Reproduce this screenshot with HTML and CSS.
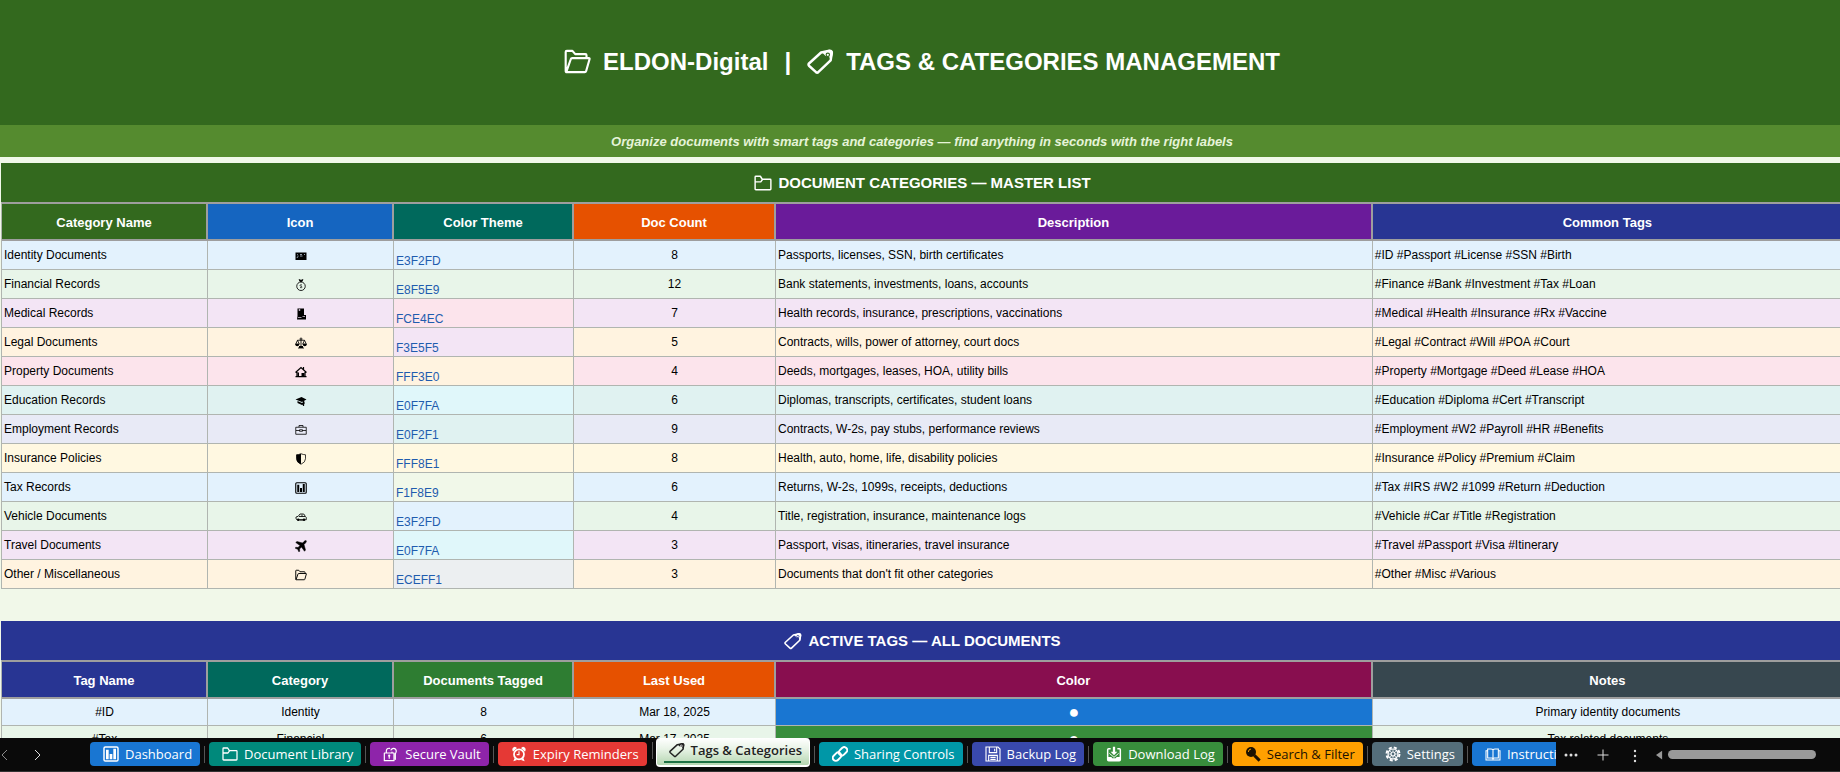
FILE: index.html
```html
<!DOCTYPE html>
<html lang="en">
<head>
  <meta charset="UTF-8" />
  <meta name="viewport" content="width=device-width, initial-scale=1.0"/>
  <title>ELDON-Digital | Tags &amp; Categories Management</title>
  <link rel="stylesheet" href="styles.css">
</head>
<body>
  <!-- shared icons -->
  <svg class="sprite" aria-hidden="true">
    <symbol id="i-folder-open" viewBox="0 0 24 24"><path d="M1.5 20.500V3.500q0-1 1-1h5l2.500 3h9q1 0 1 1V9M2 21.500 6 10q.3-1 1.300-1H22q1 0 .7 1l-3 10.500q-.3 1-1.300 1H2.500q-1 0-1-1" fill="none" stroke="currentColor" stroke-width="1.900" stroke-linejoin="round"/></symbol>
    <symbol id="i-folder" viewBox="0 0 24 24"><path d="M1.500 20V4q0-1 1-1h6l2.500 4h10.500q1 0 1 1v12q0 1-1 1h-19q-1 0-1-1zM2 10.500h7L11.500 7" fill="none" stroke="currentColor" stroke-width="1.900" stroke-linejoin="round"/></symbol>
    <symbol id="i-tag" viewBox="0 0 24 24"><path d="M1.500 14 12.500 4 20 2.500q2.500 0 2 2.500l-1 6L10 21.500q-1 .8-2 0l-6-5.500q-1-1-.500-2z" fill="none" stroke="currentColor" stroke-width="2.200" stroke-linejoin="round"/><path d="m13.500 4 5-2.300q4.500-.5 4.500 2.800l-1.500 6.500-2-3.500-3-.5z" fill="currentColor"/><circle cx="18.500" cy="6" r="1.500" fill="none" stroke="var(--tag-bg, #33691e)" stroke-width="1"/></symbol>
    <symbol id="i-chart" viewBox="0 0 24 24"><rect x="1.500" y="1.500" width="21" height="21" rx="2" fill="none" stroke="currentColor" stroke-width="2.200"/><path d="M4.500 5.500h4V20h-4zM10 12h4v8h-4zM15.500 4h4v16h-4z" fill="currentColor"/></symbol>
    <symbol id="i-lock" viewBox="0 0 24 24"><path d="M2 10.500h14.500V22H2zM5 10V7.500a4 4 0 0 1 5-4M13.500 10V9M12 6a4 4 0 1 1 7.500 3.500l-1 2v8.500" fill="none" stroke="currentColor" stroke-width="1.800" stroke-linecap="round" stroke-linejoin="round"/><circle cx="9.300" cy="14.500" r="1.700" fill="currentColor"/><path d="M8.500 15h1.700v4H8.500z" fill="currentColor"/></symbol>
    <symbol id="i-alarm" viewBox="0 0 24 24"><circle cx="12" cy="12.500" r="7.500" fill="none" stroke="currentColor" stroke-width="2.600"/><path d="M12 8v5h-3.500" fill="none" stroke="currentColor" stroke-width="1.700"/><path d="M2 6q-.5-4 4-5l3 2-6 5.500zM22 6q.5-4-4-5l-3 2 6 5.500zM3.500 23l2-5 3.500 3zM20.500 23l-2-5-3.500 3z" fill="currentColor"/></symbol>
    <symbol id="i-link" viewBox="0 0 24 24"><g fill="none" stroke="currentColor" stroke-width="2.800"><rect x="9.500" y="3.500" width="14" height="9" rx="4.500" transform="rotate(-45 16.500 8)"/><rect x="0.500" y="11.500" width="14" height="9" rx="4.500" transform="rotate(-45 7.500 16)"/></g></symbol>
    <symbol id="i-floppy" viewBox="0 0 24 24"><path d="M1.500 1.500h18l3 3v18h-21zM6.500 2v8h11V2M5.500 22v-8h13v8M14.500 4v4M8 17h8M8 20h8" fill="none" stroke="currentColor" stroke-width="1.700"/></symbol>
    <symbol id="i-inbox" viewBox="0 0 24 24"><path d="M7 4H4q-1.500 0-1.500 1.500v15Q2.500 22 4 22h16q1.500 0 1.500-1.500v-15Q21.500 4 20 4h-3" fill="none" stroke="currentColor" stroke-width="2.200"/><path d="M3 16.500h5l1.500 2h5l1.500-2h5V22H3z" fill="currentColor"/><path d="M10.300 1h3.400v7.500H17L12 14 7 8.500h3.300z" fill="currentColor"/><path d="m5 11 7 6 7-6" fill="none" stroke="currentColor" stroke-width="1.400"/></symbol>
    <symbol id="i-search" viewBox="0 0 24 24"><circle cx="9" cy="9" r="7.500" fill="currentColor"/><path d="m14 14 8 8" stroke="currentColor" stroke-width="4.500"/><path d="M5 9q0-4 4-4.500" fill="none" stroke="#ffa000" stroke-width="1.400"/></symbol>
    <symbol id="i-gear" viewBox="0 0 24 24"><g fill="none" stroke="currentColor" stroke-width="1.800"><circle cx="12" cy="12" r="3"/><circle cx="12" cy="12" r="7.500"/><circle cx="12" cy="12" r="9.700" stroke-width="3" stroke-dasharray="4.600 3.020"/><path d="M12 4.500V9M12 15v4.500M4.500 12H9M15 12h4.500M6.700 6.700l3.200 3.200M14.100 14.100l3.200 3.200M17.300 6.700l-3.200 3.200M9.900 14.100l-3.200 3.200" stroke-width="1"/></g></symbol>
    <symbol id="i-book" viewBox="0 0 24 24"><path d="M12 19.500V5.500q-1-1-3-1H4v13.500h6q1.500 0 2 1.500 .500-1.500 2-1.500h6V4.500h-5q-2 0-3 1M4 7H1.500v14h21V7H20" fill="none" stroke="currentColor" stroke-width="1.600"/></symbol>
    <symbol id="i-id" viewBox="0 0 24 24"><path d="M1 5h22v15H1z" fill="currentColor"/><path d="M4 9.500h2M4 16q1.500-4 3-4M10 9h4M10 12h5M18 9h2" stroke="#c5d6e6" stroke-width="1.500" fill="none"/></symbol>
    <symbol id="i-money" viewBox="0 0 24 24"><circle cx="12" cy="14.500" r="8.500" fill="none" stroke="currentColor" stroke-width="1.700"/><path d="m8 1 4 1.500L16 1l-2 4h-4z" fill="currentColor" stroke="currentColor" stroke-width="1.400"/><path d="M14 12q-4-1.500-4 .8 0 1.200 2 1.700t2 1.700q0 2.300-4 .8" fill="none" stroke="currentColor" stroke-width="1.400"/></symbol>
    <symbol id="i-medical" viewBox="0 0 24 24"><path d="M5 1h13v13h4v9H4l1-7z" fill="currentColor"/><path d="M7 4h4M9 2v4M6 19h7M15 17h5" stroke="#d8c8dc" stroke-width="1.500"/></symbol>
    <symbol id="i-scales" viewBox="0 0 24 24"><path d="M12 1v20M5 6.500h14M5 6.500 1.500 14h7zM19 6.500 15.500 14h7zM6 22h12M9 4h6" fill="none" stroke="currentColor" stroke-width="1.700"/><path d="M0 14h9q-1 4.500-4.500 4.500T0 14zM15 14h9q-1 4.500-4.500 4.500T15 14zM8 18h8v4H8z" fill="currentColor"/></symbol>
    <symbol id="i-house" viewBox="0 0 24 24"><path d="m1 13 11-10 11 10M4 12v9h16v-9M17 7V2" fill="none" stroke="currentColor" stroke-width="2.400"/><path d="M1 20h22v2.500H1zM5 13h3v8H5zM13 14h6v8h-6z" fill="currentColor"/></symbol>
    <symbol id="i-cap" viewBox="0 0 24 24"><path d="m1 9 12-5 10 5-9 5zM5 12l9 4 5-3v5l-5 2-9-4z" fill="currentColor"/><path d="M17 11v11" stroke="currentColor" stroke-width="2.500"/></symbol>
    <symbol id="i-briefcase" viewBox="0 0 24 24"><path d="M1.500 6.500h21v14h-21zM8 6V3h8v3M2 13h7M15 13h7M9 11.500h6v3H9z" fill="none" stroke="currentColor" stroke-width="1.600"/></symbol>
    <symbol id="i-shield" viewBox="0 0 24 24"><path d="M12 1.500Q7 3.500 3 3.500v8q0 7 9 11 9-4 9-11v-8q-4 0-9-2z" fill="none" stroke="currentColor" stroke-width="1.500"/><path d="M12 1.500Q7 3.500 3 3.500v8q0 7 9 11z" fill="currentColor"/></symbol>
    <symbol id="i-car" viewBox="0 0 24 24"><path d="M4 17.500q-3-1-2-5.500l4.500-1.500L10 6h7.500l3 4.500q3 1.500 2 7zM8 11h12M14 7v4M9 18h7" fill="none" stroke="currentColor" stroke-width="1.700"/><circle cx="6.500" cy="17.500" r="2.500" fill="currentColor"/><circle cx="18" cy="17.500" r="2.500" fill="currentColor"/></symbol>
    <symbol id="i-plane" viewBox="0 0 24 24"><path d="M22.500 1.500q-2-1-4.500 1.500l-3 3L4 3 1.500 5l8.500 6-4 4-4.500-.5L.5 16.500l5 2L7.500 23.500l2-1-.5-4.500 4-4 6 8.500 2-2.500L18 9l3-3q2.500-2.500 1.500-4.500z" fill="currentColor" stroke="currentColor"/></symbol>
  </svg>

  <main class="sheet">
    <h1 class="title">
      <svg class="icon"><use href="#i-folder-open"/></svg>
      <span>ELDON-Digital</span>
      <span>|</span>
      <svg class="icon"><use href="#i-tag"/></svg>
      <span>TAGS &amp; CATEGORIES MANAGEMENT</span>
    </h1>
    <p class="subtitle">Organize documents with smart tags and categories — find anything in seconds with the right labels</p>

    <section class="block categories">
      <h2><svg class="icon"><use href="#i-folder"/></svg>DOCUMENT CATEGORIES — MASTER LIST</h2>
      <table>
        <colgroup><col class="w-name"><col class="w-icon"><col class="w-theme"><col class="w-count"><col class="w-desc"><col></colgroup>
        <thead>
          <tr>
            <th class="h-green">Category Name</th>
            <th class="h-blue">Icon</th>
            <th class="h-teal">Color Theme</th>
            <th class="h-orange">Doc Count</th>
            <th class="h-purple">Description</th>
            <th class="h-indigo">Common Tags</th>
          </tr>
        </thead>
        <tbody>
          <tr class="blue"><td>Identity Documents</td><td><svg><use href="#i-id"/></svg></td><td class="theme blue">E3F2FD</td><td>8</td><td>Passports, licenses, SSN, birth certificates</td><td>#ID #Passport #License #SSN #Birth</td></tr>
          <tr class="green"><td>Financial Records</td><td><svg><use href="#i-money"/></svg></td><td class="theme green">E8F5E9</td><td>12</td><td>Bank statements, investments, loans, accounts</td><td>#Finance #Bank #Investment #Tax #Loan</td></tr>
          <tr class="purple"><td>Medical Records</td><td><svg><use href="#i-medical"/></svg></td><td class="theme pink">FCE4EC</td><td>7</td><td>Health records, insurance, prescriptions, vaccinations</td><td>#Medical #Health #Insurance #Rx #Vaccine</td></tr>
          <tr class="orange"><td>Legal Documents</td><td><svg><use href="#i-scales"/></svg></td><td class="theme purple">F3E5F5</td><td>5</td><td>Contracts, wills, power of attorney, court docs</td><td>#Legal #Contract #Will #POA #Court</td></tr>
          <tr class="pink"><td>Property Documents</td><td><svg><use href="#i-house"/></svg></td><td class="theme orange">FFF3E0</td><td>4</td><td>Deeds, mortgages, leases, HOA, utility bills</td><td>#Property #Mortgage #Deed #Lease #HOA</td></tr>
          <tr class="teal"><td>Education Records</td><td><svg><use href="#i-cap"/></svg></td><td class="theme cyan">E0F7FA</td><td>6</td><td>Diplomas, transcripts, certificates, student loans</td><td>#Education #Diploma #Cert #Transcript</td></tr>
          <tr class="indigo"><td>Employment Records</td><td><svg><use href="#i-briefcase"/></svg></td><td class="theme teal">E0F2F1</td><td>9</td><td>Contracts, W-2s, pay stubs, performance reviews</td><td>#Employment #W2 #Payroll #HR #Benefits</td></tr>
          <tr class="amber"><td>Insurance Policies</td><td><svg><use href="#i-shield"/></svg></td><td class="theme amber">FFF8E1</td><td>8</td><td>Health, auto, home, life, disability policies</td><td>#Insurance #Policy #Premium #Claim</td></tr>
          <tr class="blue"><td>Tax Records</td><td><svg><use href="#i-chart"/></svg></td><td class="theme lime">F1F8E9</td><td>6</td><td>Returns, W-2s, 1099s, receipts, deductions</td><td>#Tax #IRS #W2 #1099 #Return #Deduction</td></tr>
          <tr class="green"><td>Vehicle Documents</td><td><svg><use href="#i-car"/></svg></td><td class="theme blue">E3F2FD</td><td>4</td><td>Title, registration, insurance, maintenance logs</td><td>#Vehicle #Car #Title #Registration</td></tr>
          <tr class="purple"><td>Travel Documents</td><td><svg><use href="#i-plane"/></svg></td><td class="theme cyan">E0F7FA</td><td>3</td><td>Passport, visas, itineraries, travel insurance</td><td>#Travel #Passport #Visa #Itinerary</td></tr>
          <tr class="orange"><td>Other / Miscellaneous</td><td><svg><use href="#i-folder-open"/></svg></td><td class="theme grey">ECEFF1</td><td>3</td><td>Documents that don't fit other categories</td><td>#Other #Misc #Various</td></tr>
        </tbody>
      </table>
    </section>

    <section class="block tags">
      <h2><svg class="icon"><use href="#i-tag"/></svg>ACTIVE TAGS — ALL DOCUMENTS</h2>
      <table>
        <colgroup><col class="w-name"><col class="w-icon"><col class="w-theme"><col class="w-count"><col class="w-desc"><col></colgroup>
        <thead>
          <tr>
            <th class="h-indigo">Tag Name</th>
            <th class="h-teal">Category</th>
            <th class="h-leaf">Documents Tagged</th>
            <th class="h-orange">Last Used</th>
            <th class="h-wine">Color</th>
            <th class="h-slate">Notes</th>
          </tr>
        </thead>
        <tbody>
          <tr class="blue"><td>#ID</td><td>Identity</td><td>8</td><td>Mar 18, 2025</td><td class="dot dot-blue">●</td><td>Primary identity documents</td></tr>
          <tr class="green"><td>#Tax</td><td>Financial</td><td>6</td><td>Mar 17, 2025</td><td class="dot dot-green">●</td><td>Tax related documents</td></tr>
        </tbody>
      </table>
    </section>
  </main>

  <footer class="tabbar">
    <div class="arrows">
      <button type="button" class="prev" aria-label="Previous sheet"><svg viewBox="0 0 10 12"><path d="M7 1 2 6l5 5"/></svg></button>
      <button type="button" aria-label="Next sheet"><svg viewBox="0 0 10 12"><path d="m3 1 5 5-5 5"/></svg></button>
    </div>
    <nav class="tabs">
      <a href="#" class="tab t-blue"><svg><use href="#i-chart"/></svg>Dashboard</a>
      <a href="#" class="tab t-teal"><svg><use href="#i-folder"/></svg>Document Library</a>
      <a href="#" class="tab t-purple"><svg><use href="#i-lock"/></svg>Secure Vault</a>
      <a href="#" class="tab t-red"><svg><use href="#i-alarm"/></svg>Expiry Reminders</a>
      <a href="#" class="tab active"><svg><use href="#i-tag"/></svg><span>Tags &amp; Categories</span></a>
      <a href="#" class="tab t-cyan"><svg><use href="#i-link"/></svg>Sharing Controls</a>
      <a href="#" class="tab t-indigo"><svg><use href="#i-floppy"/></svg>Backup Log</a>
      <a href="#" class="tab t-green"><svg><use href="#i-inbox"/></svg>Download Log</a>
      <a href="#" class="tab t-amber"><svg><use href="#i-search"/></svg>Search &amp; Filter</a>
      <a href="#" class="tab t-slate"><svg><use href="#i-gear"/></svg>Settings</a>
      <a href="#" class="tab t-blue"><svg><use href="#i-book"/></svg>Instructions</a>
    </nav>
    <div class="tools">
      <button type="button" aria-label="More sheets"><svg viewBox="0 0 16 16" class="fill"><circle cx="3" cy="8" r="1.500"/><circle cx="8" cy="8" r="1.500"/><circle cx="13" cy="8" r="1.500"/></svg></button>
      <button type="button" aria-label="New sheet"><svg viewBox="0 0 16 16"><path d="M8 2.500v11M2.500 8h11"/></svg></button>
      <button type="button" aria-label="Options"><svg viewBox="0 0 16 16" class="fill"><circle cx="8" cy="4" r="1.200"/><circle cx="8" cy="9" r="1.200"/><circle cx="8" cy="14" r="1.200"/></svg></button>
    </div>
    <div class="scroll">
      <button type="button" aria-label="Scroll left"><svg viewBox="0 0 8 10" class="fill"><path d="M7 0v10L0 5z"/></svg></button>
      <div class="thumb"></div>
    </div>
  </footer>
</body>
</html>
```
FILE: styles.css
```css
* {
  box-sizing: border-box;
}

body {
  margin: 0;
  height: 100vh;
  overflow: hidden;
  display: flex;
  flex-direction: column;
  background: #f1f8e9;
  color: #000;
  font-family: "Liberation Sans", Arial, sans-serif;
  font-size: 12px;
}

.sprite {
  display: none;
}

.sheet {
  flex: 1;
  min-height: 0;
  overflow: hidden;
}

/* the sheet runs a little past the right edge */
.title,
.subtitle {
  margin: 0 -4px 0 0;
}

.title {
  height: 125px;
  padding-bottom: 2px;
  display: flex;
  align-items: center;
  justify-content: center;
  gap: 12px;
  background: #33691e;
  color: #fff;
  font-size: 24px;
}

.title .icon {
  width: 27px;
  height: 27px;
}

.title span + span {
  margin: 0 4px;
}

.subtitle {
  margin-bottom: 6px;
  padding-top: 1px;
  line-height: 31px;
  background: #558b2f;
  color: #e6f4d8;
  font-size: 13px;
  font-weight: bold;
  font-style: italic;
  text-align: center;
}

.block {
  margin: 0 -4px 32px 1px;
}

.block h2 {
  margin: 0;
  height: 39px;
  display: flex;
  align-items: center;
  justify-content: center;
  gap: 6px;
  background: #33691e;
  color: #fff;
  font-size: 15px;
}

.block h2 .icon {
  width: 18px;
  height: 18px;
}

.tags h2 {
  background: #283593;
  --tag-bg: #283593;
}

table {
  width: 100%;
  table-layout: fixed;
  border-collapse: separate;
  border-spacing: 0;
  border-left: 1px solid #b0b5b0;
}

.w-name { width: 206px; }
.w-icon { width: 186px; }
.w-theme { width: 180px; }
.w-count { width: 202px; }
.w-desc { width: 32.4%; }

th {
  height: 39px;
  padding: 1px 0 0;
  border: solid #9e9e9e;
  border-width: 2px 2px 2px 0;
  color: #fff;
  font-size: 13px;
}

td {
  height: 29px;
  padding: 0 2px;
  border: solid #b0b5b0;
  border-width: 0 1px 1px 0;
  line-height: 16px;
  white-space: nowrap;
}

td svg {
  display: block;
  width: 12px;
  height: 12px;
  margin: 2px auto 0;
}

.categories td:nth-child(4),
.tags td {
  text-align: center;
}

.tags td {
  height: 27px;
}

td.theme {
  vertical-align: bottom;
  color: #1f5cae;
}

.h-green { background: #33691e; }
.h-blue { background: #1565c0; }
.h-teal { background: #00695c; }
.h-leaf { background: #2e7d32; }
.h-orange { background: #e65100; }
.h-purple { background: #6a1b9a; }
.h-indigo { background: #283593; }
.h-wine { background: #880e4f; }
.h-slate { background: #37474f; }

.blue { background: #e3f2fd; }
.green { background: #e8f5e9; }
.purple { background: #f3e5f5; }
.orange { background: #fff3e0; }
.pink { background: #fce4ec; }
.teal { background: #e0f2f1; }
.indigo { background: #e8eaf6; }
.amber { background: #fff8e1; }
.cyan { background: #e0f7fa; }
.lime { background: #f1f8e9; }
.grey { background: #eceff1; }

td.dot {
  color: #fff;
  font-size: 18px;
}

.dot-blue { background: #1976d2; }
.dot-green { background: #388e3c; }

/* bottom bar */
.tabbar {
  flex: none;
  height: 34px;
  display: flex;
  align-items: center;
  background: #0a0a0a;
  border-bottom: 1px solid #333;
  font-family: "Open Sans", "Noto Sans", sans-serif;
  font-size: 13px;
}

.tabbar button {
  display: flex;
  align-items: center;
  justify-content: center;
  padding: 0;
  border: 0;
  background: none;
  color: #ddd;
  cursor: pointer;
}

.tabbar button svg {
  fill: none;
  stroke: currentColor;
}

.tabbar button svg.fill {
  fill: currentColor;
  stroke: none;
}

.arrows {
  flex: none;
  width: 90px;
  display: flex;
  gap: 22px;
}

.arrows svg {
  width: 10px;
  height: 12px;
}

.arrows .prev {
  color: #8a8a8a;
}

.tabs {
  flex: 1;
  min-width: 0;
  height: 34px;
  overflow: hidden;
  display: flex;
  gap: 9px;
}

.tab {
  flex: none;
  position: relative;
  height: 24px;
  margin-top: 4px;
  padding: 0 8px 0 13px;
  display: flex;
  align-items: center;
  gap: 6px;
  border-radius: 4px;
  color: #fff;
  text-decoration: none;
}

.tab + .tab::before {
  content: "";
  position: absolute;
  left: -5px;
  top: 4px;
  width: 1px;
  height: 17px;
  background: #555;
}

.tab svg {
  width: 16px;
  height: 16px;
}

.tab.active {
  height: 29px;
  margin-top: 0;
  padding: 0 7px 3px 12px;
  background: linear-gradient(#fff, #e8f3e6 40%, #b5d6b1);
  border: solid #fff;
  border-width: 0 1px 2px;
  color: #222;
  font-weight: 600;
  --tag-bg: #fff;
}

.tab.active::after {
  content: "";
  position: absolute;
  left: 7px;
  right: 8px;
  bottom: 2px;
  height: 2px;
  background: #1e7145;
}

.t-blue { background: #1976d2; }
.t-teal { background: #00897b; }
.t-purple { background: #8e24aa; }
.t-red { background: #e53935; }
.t-cyan { background: #0097a7; }
.t-indigo { background: #3949ab; }
.t-green { background: #388e3c; }
.t-amber { background: #ffa000; color: #1c1200; }
.t-slate { background: #546e7a; }

.tools {
  flex: none;
  width: 100px;
  padding-left: 7px;
  display: flex;
  gap: 16px;
}

.tools svg {
  width: 16px;
  height: 16px;
}

.scroll {
  flex: none;
  width: 184px;
  display: flex;
  align-items: center;
  gap: 5px;
}

.scroll svg {
  width: 7px;
  height: 10px;
  color: #999;
}

.thumb {
  width: 148px;
  height: 9px;
  border-radius: 5px;
  background: #999;
}
```
